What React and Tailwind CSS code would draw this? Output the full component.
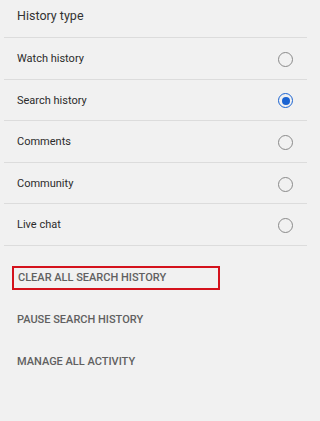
import React, { useState } from "react";

const types = ["Watch history", "Search history", "Comments", "Community", "Live chat"];

const Radio = ({ checked }) => (
  <span
    className={
      "flex items-center justify-center w-[15px] h-[15px] rounded-full border-[1.5px] " +
      (checked ? "border-[#1a63d2]" : "border-[#8a8a8a]")
    }
  >
    {checked && <span className="w-[8px] h-[8px] rounded-full bg-[#1a63d2]" />}
  </span>
);

export default function App() {
  const [selected, setSelected] = useState("Search history");

  return (
    <div className="w-[320px] h-[421px] bg-[#f1f1f1] font-['Roboto',sans-serif] overflow-hidden">
      <div className="ml-[4px] w-[303px]">
        {/* header */}
        <div className="h-[38px] flex items-center pl-[13px] pb-[5px] border-b border-[#dcdcdc]">
          <span className="text-[12.5px] text-[#333]">History type</span>
        </div>

        {types.map((t) => (
          <div
            key={t}
            onClick={() => setSelected(t)}
            className="h-[41.6px] flex items-center justify-between pl-[13px] pr-[14px] pt-[2px] border-b border-[#dcdcdc] cursor-pointer"
          >
            <span className="text-[11px] text-[#2b2b2b]">{t}</span>
            <Radio checked={selected === t} />
          </div>
        ))}
      </div>

      {/* actions */}
      <div className="flex flex-col mt-[11px]">
        <div className="h-[42px] flex items-center">
          <div className="ml-[12px] w-[208px] h-[24px] flex items-center pl-[4px] border-2 border-[#d4121c]">
            <span className="text-[11px] font-medium text-[#606060] uppercase">Clear all search history</span>
          </div>
        </div>
        <div className="h-[42px] flex items-center pl-[17px]">
          <span className="text-[11px] font-medium text-[#606060] uppercase">Pause search history</span>
        </div>
        <div className="h-[42px] flex items-center pl-[17px]">
          <span className="text-[11px] font-medium text-[#606060] uppercase">Manage all activity</span>
        </div>
      </div>
    </div>
  );
}
